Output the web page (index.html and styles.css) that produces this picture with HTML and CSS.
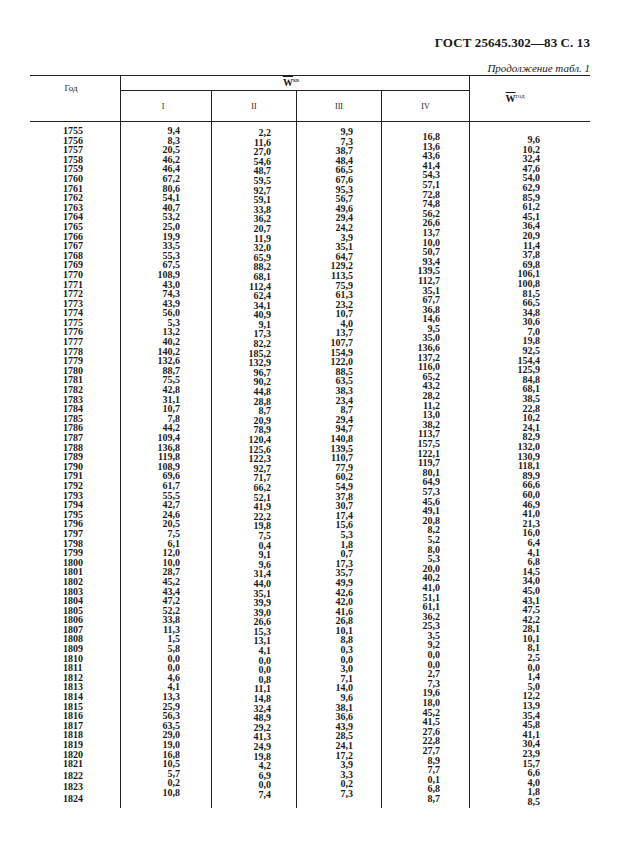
FILE: index.html
```html
<!DOCTYPE html>
<html lang="ru">
<head>
<meta charset="utf-8">
<title>ГОСТ 25645.302—83 С. 13</title>
<link rel="stylesheet" href="styles.css">
</head>
<body>
<div class="page">
  <div class="doc-title">ГОСТ 25645.302—83 С. 13</div>
  <div class="caption">Продолжение табл. 1</div>
  <div class="table">
    <div class="thead">
      <div class="h-year">Год</div>
      <div class="h-kv"><span class="w">W</span><sup>кв</sup></div>
      <div class="h-q h-q1">I</div>
      <div class="h-q h-q2">II</div>
      <div class="h-q h-q3">III</div>
      <div class="h-q h-q4">IV</div>
      <div class="h-god"><span class="w">W</span><sup>год</sup></div>
    </div>
    <div class="tbody">
      <div class="col c-year">1755<br>1756<br>1757<br>1758<br>1759<br>1760<br>1761<br>1762<br>1763<br>1764<br>1765<br>1766<br>1767<br>1768<br>1769<br>1770<br>1771<br>1772<br>1773<br>1774<br>1775<br>1776<br>1777<br>1778<br>1779<br>1780<br>1781<br>1782<br>1783<br>1784<br>1785<br>1786<br>1787<br>1788<br>1789<br>1790<br>1791<br>1792<br>1793<br>1794<br>1795<br>1796<br>1797<br>1798<br>1799<br>1800<br>1801<br>1802<br>1803<br>1804<br>1805<br>1806<br>1807<br>1808<br>1809<br>1810<br>1811<br>1812<br>1813<br>1814<br>1815<br>1816<br>1817<br>1818<br>1819<br>1820<br>1821<br><span class="wide">1822</span><br><span class="wide">1823</span><br><span class="wide">1824</span></div>
      <div class="col c-q1">9,4<br>8,3<br>20,5<br>46,2<br>46,4<br>67,2<br>80,6<br>54,1<br>40,7<br>53,2<br>25,0<br>19,9<br>33,5<br>55,3<br>67,5<br>108,9<br>43,0<br>74,3<br>43,9<br>56,0<br>5,3<br>13,2<br>40,2<br>140,2<br>132,6<br>88,7<br>75,5<br>42,8<br>31,1<br>10,7<br>7,8<br>44,2<br>109,4<br>136,8<br>119,8<br>108,9<br>69,6<br>61,7<br>55,5<br>42,7<br>24,6<br>20,5<br>7,5<br>6,1<br>12,0<br>10,0<br>28,7<br>45,2<br>43,4<br>47,2<br>52,2<br>33,8<br>11,3<br>1,5<br>5,8<br>0,0<br>0,0<br>4,6<br>4,1<br>13,3<br>25,9<br>56,3<br>63,5<br>29,0<br>19,0<br>16,8<br>10,5<br>5,7<br>0,2<br>10,8</div>
      <div class="col c-q2">2,2<br>11,6<br>27,0<br>54,6<br>48,7<br>59,5<br>92,7<br>59,1<br>33,8<br>36,2<br>20,7<br>11,9<br>32,0<br>65,9<br>88,2<br>68,1<br>112,4<br>62,4<br>34,1<br>40,9<br>9,1<br>17,3<br>82,2<br>185,2<br>132,9<br>96,7<br>90,2<br>44,8<br>28,8<br>8,7<br>20,9<br>78,9<br>120,4<br>125,6<br>122,3<br>92,7<br>71,7<br>66,2<br>52,1<br>41,9<br>22,2<br>19,8<br>7,5<br>0,4<br>9,1<br>9,6<br>31,4<br>44,0<br>35,1<br>39,9<br>39,0<br>26,6<br>15,3<br>13,1<br>4,1<br>0,0<br>0,0<br>0,8<br>11,1<br>14,8<br>32,4<br>48,9<br>29,2<br>41,3<br>24,9<br>19,8<br>4,2<br>6,9<br>0,0<br>7,4</div>
      <div class="col c-q3">9,9<br>7,3<br>38,7<br>48,4<br>66,5<br>67,6<br>95,3<br>56,7<br>49,6<br>29,4<br>24,2<br>3,9<br>35,1<br>64,7<br>129,2<br>113,5<br>75,9<br>61,3<br>23,2<br>10,7<br>4,0<br>13,7<br>107,7<br>154,9<br>122,0<br>88,5<br>63,5<br>38,3<br>23,4<br>8,7<br>29,4<br>94,7<br>140,8<br>139,5<br>110,7<br>77,9<br>60,2<br>54,9<br>37,8<br>30,7<br>17,4<br>15,6<br>5,3<br>1,8<br>0,7<br>17,3<br>35,7<br>49,9<br>42,6<br>42,0<br>41,6<br>26,8<br>10,1<br>8,8<br>0,3<br>0,0<br>3,0<br>7,1<br>14,0<br>9,6<br>38,1<br>36,6<br>43,9<br>28,5<br>24,1<br>17,2<br>3,9<br>3,3<br>0,2<br>7,3</div>
      <div class="col c-q4">16,8<br>13,6<br>43,6<br>41,4<br>54,3<br>57,1<br>72,8<br>74,8<br>56,2<br>26,6<br>13,7<br>10,0<br>50,7<br>93,4<br>139,5<br>112,7<br>35,1<br>67,7<br>36,8<br>14,6<br>9,5<br>35,0<br>136,6<br>137,2<br>116,0<br>65,2<br>43,2<br>28,2<br>11,2<br>13,0<br>38,2<br>113,7<br>157,5<br>122,1<br>119,7<br>80,1<br>64,9<br>57,3<br>45,6<br>49,1<br>20,8<br>8,2<br>5,2<br>8,0<br>5,3<br>20,0<br>40,2<br>41,0<br>51,1<br>61,1<br>36,2<br>25,3<br>3,5<br>9,2<br>0,0<br>0,0<br>2,7<br>7,3<br>19,6<br>18,0<br>45,2<br>41,5<br>27,6<br>22,8<br>27,7<br>8,9<br>7,7<br>0,1<br>6,8<br>8,7</div>
      <div class="col c-god">9,6<br>10,2<br>32,4<br>47,6<br>54,0<br>62,9<br>85,9<br>61,2<br>45,1<br>36,4<br>20,9<br>11,4<br>37,8<br>69,8<br>106,1<br>100,8<br>81,5<br>66,5<br>34,8<br>30,6<br>7,0<br>19,8<br>92,5<br>154,4<br>125,9<br>84,8<br>68,1<br>38,5<br>22,8<br>10,2<br>24,1<br>82,9<br>132,0<br>130,9<br>118,1<br>89,9<br>66,6<br>60,0<br>46,9<br>41,0<br>21,3<br>16,0<br>6,4<br>4,1<br>6,8<br>14,5<br>34,0<br>45,0<br>43,1<br>47,5<br>42,2<br>28,1<br>10,1<br>8,1<br>2,5<br>0,0<br>1,4<br>5,0<br>12,2<br>13,9<br>35,4<br>45,8<br>41,1<br>30,4<br>23,9<br>15,7<br>6,6<br>4,0<br>1,8<br>8,5</div>
    </div>
  </div>
</div>
</body>
</html>
```
FILE: styles.css
```css
html, body {
  margin: 0;
  padding: 0;
  background: #ffffff;
}

body {
  font-family: "Liberation Serif", "DejaVu Serif", serif;
  color: #1a1a1a;
}

.page {
  width: 617px;
  height: 847px;
  box-sizing: border-box;
  padding: 35px 27px 0 30px;
  overflow: hidden;
}

.doc-title {
  text-align: right;
  font-size: 13px;
  font-weight: bold;
  line-height: 15px;
  letter-spacing: 0.1px;
}

.caption {
  margin-top: 12px;
  text-align: right;
  font-style: italic;
  font-size: 11px;
  line-height: 13px;
  height: 13px;
}

.table {
  width: 560px;
  border-top: 1.5px solid #222;
}

.thead {
  display: grid;
  grid-template-columns: 91px 91px 85px 85px 88px 120px;
  grid-template-rows: 15px 30px;
  border-bottom: 1px solid #222;
  font-size: 8px;
}

.h-year {
  grid-column: 1;
  grid-row: 1 / 3;
  border-right: 1px solid #222;
  font-size: 9px;
  padding: 7px 8px 0 0;
  text-align: center;
}

.h-kv {
  grid-column: 2 / 6;
  grid-row: 1;
  border-right: 1px solid #222;
  border-bottom: 1px solid #222;
  text-align: center;
  line-height: 14px;
  padding-right: 8px;
}

.w {
  font-size: 10px;
  text-decoration: overline;
  font-weight: bold;
}

sup {
  font-size: 6.5px;
  vertical-align: 4px;
  line-height: 0;
}

.h-q {
  grid-row: 2;
  border-right: 1px solid #222;
  display: flex;
  align-items: center;
  justify-content: center;
  font-size: 8px;
}

.h-q1 { grid-column: 2; padding-right: 6px; }
.h-q2 { grid-column: 3; }
.h-q3 { grid-column: 4; }
.h-q4 { grid-column: 5; }

.h-god {
  grid-column: 6;
  grid-row: 1 / 3;
  text-align: center;
  padding: 16px 30px 0 0;
  line-height: 14px;
}

.tbody {
  display: grid;
  grid-template-columns: 91px 91px 85px 85px 88px 120px;
  height: 686px;
}

.col {
  font-size: 10px;
  font-weight: bold;
  line-height: 9.6px;
  text-align: right;
  border-right: 1px solid #222;
  box-sizing: border-box;
  white-space: nowrap;
}

.c-year {
  text-align: left;
  padding: 4px 0 0 33px;
}

.c-year .wide {
  display: inline-block;
  margin-top: 2px;
}

.c-q1 { padding: 4px 31px 0 0; }
.c-q2 { padding: 6px 25px 0 0; }
.c-q3 { padding: 5px 28px 0 0; }
.c-q4 { padding: 10px 29px 0 0; }
.c-god {
  padding: 13px 50px 0 0;
  border-right: none;
}
```
